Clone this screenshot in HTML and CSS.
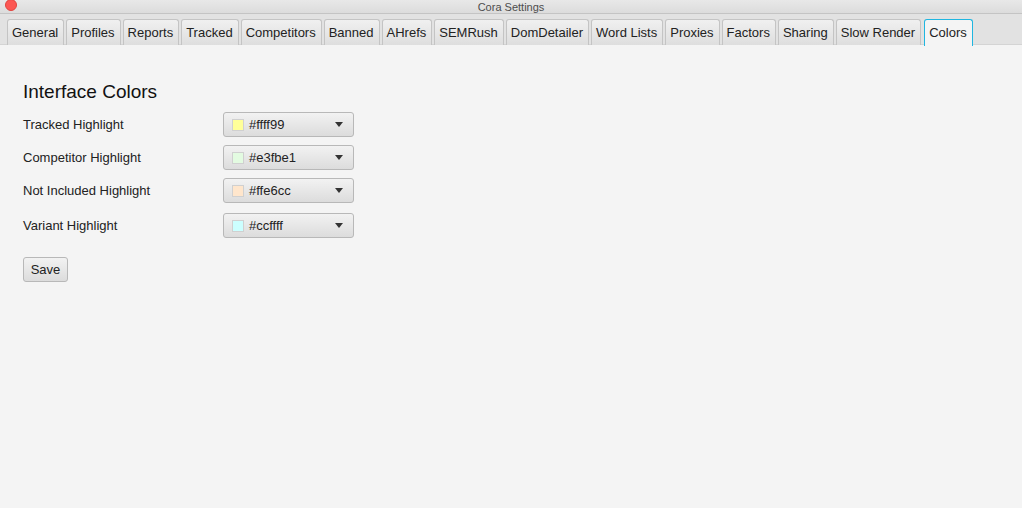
FILE: index.html
```html
<!DOCTYPE html>
<html lang="en">

<head>
    <meta charset="UTF-8">
    <meta name="viewport" content="width=device-width, initial-scale=1.0">
    <title>Cora Settings</title>
    <link rel="stylesheet" href="styles.css">
</head>

<body>
    <div class="window">
        <div class="titlebar">
            <span class="close-dot"></span>
            <span class="title">Cora Settings</span>
        </div>
        <div class="tabs">
            <div class="tab">General</div>
            <div class="tab">Profiles</div>
            <div class="tab">Reports</div>
            <div class="tab">Tracked</div>
            <div class="tab">Competitors</div>
            <div class="tab">Banned</div>
            <div class="tab">AHrefs</div>
            <div class="tab">SEMRush</div>
            <div class="tab">DomDetailer</div>
            <div class="tab">Word Lists</div>
            <div class="tab">Proxies</div>
            <div class="tab">Factors</div>
            <div class="tab">Sharing</div>
            <div class="tab">Slow Render</div>
            <div class="tab active">Colors</div>
        </div>
        <div class="content">
            <h2>Interface Colors</h2>
            <div class="color-form">
                <label>Tracked Highlight</label>
                <div class="picker">
                    <span class="swatch" style="background:#ffff99"></span>
                    <span class="value">#ffff99</span>
                    <span class="arrow"></span>
                </div>
                <label>Competitor Highlight</label>
                <div class="picker">
                    <span class="swatch" style="background:#e3fbe1"></span>
                    <span class="value">#e3fbe1</span>
                    <span class="arrow"></span>
                </div>
                <label>Not Included Highlight</label>
                <div class="picker">
                    <span class="swatch" style="background:#ffe6cc"></span>
                    <span class="value">#ffe6cc</span>
                    <span class="arrow"></span>
                </div>
                <label class="last">Variant Highlight</label>
                <div class="picker last">
                    <span class="swatch" style="background:#ccffff"></span>
                    <span class="value">#ccffff</span>
                    <span class="arrow"></span>
                </div>
            </div>
            <button class="save">Save</button>
        </div>
    </div>
</body>

</html>
```

FILE: styles.css
```css
body {
    font-family: "Liberation Sans", Arial, sans-serif;
    margin: 0;
    padding: 0;
    background-color: #f4f4f4;
    color: #222;
}

.window {
    width: 1022px;
    height: 508px;
    display: flex;
    flex-direction: column;
    overflow: hidden;
}

.titlebar {
    height: 13px;
    position: relative;
    background: linear-gradient(#e8e8e8, #dcdcdc);
    border-bottom: 1px solid #c4c4c4;
    display: flex;
    justify-content: center;
    align-items: center;
}

.close-dot {
    position: absolute;
    left: 5px;
    top: -1px;
    width: 12px;
    height: 12px;
    border-radius: 50%;
    background: #fc5753;
    border: 1px solid #e0443e;
    box-sizing: border-box;
}

.title {
    font-size: 11px;
    color: #4d4d4d;
    margin-top: 1px;
}

.tabs {
    height: 31px;
    box-sizing: border-box;
    padding: 5px 0 0 7px;
    display: flex;
    gap: 2px;
    background: #e2e2e2;
    border-bottom: 1px solid #d4d4d4;
}

.tab {
    height: 26px;
    box-sizing: border-box;
    padding: 0 5px 0 4px;
    font-size: 13px;
    line-height: 25px;
    color: #222;
    background: linear-gradient(#f0f0f0, #dedede);
    border: 1px solid #c4c4c4;
    border-bottom: none;
    border-radius: 3px 3px 0 0;
}

.tab.active {
    background: #f4f4f4;
    border: 1px solid #1fb6e0;
    border-bottom: none;
    margin-left: 1px;
    height: 27px;
}

.content {
    flex: 1;
    padding: 36px 23px;
}

h2 {
    font-size: 19px;
    font-weight: normal;
    margin: 0 0 9px 0;
    color: #111;
}

.color-form {
    display: grid;
    grid-template-columns: 200px 131px;
    row-gap: 8px;
    align-items: center;
}

.color-form .last {
    margin-top: 2px;
}

.color-form label {
    font-size: 13px;
    color: #222;
}

.picker {
    height: 25px;
    box-sizing: border-box;
    display: flex;
    align-items: center;
    padding: 0 10px 0 8px;
    background: linear-gradient(#f2f2f2, #dcdcdc);
    border: 1px solid #b8b8b8;
    border-radius: 3px;
    font-size: 13px;
}

.swatch {
    width: 10px;
    height: 10px;
    border: 1px solid #d0d0d0;
    margin-right: 5px;
}

.value {
    flex: 1;
}

.arrow {
    width: 0;
    height: 0;
    border-left: 4px solid transparent;
    border-right: 4px solid transparent;
    border-top: 5px solid #333;
}

.save {
    margin-top: 19px;
    height: 25px;
    width: 45px;
    font-family: "Liberation Sans", Arial, sans-serif;
    font-size: 13px;
    color: #222;
    background: linear-gradient(#f2f2f2, #dcdcdc);
    border: 1px solid #b8b8b8;
    border-radius: 3px;
    padding: 0;
}
```
